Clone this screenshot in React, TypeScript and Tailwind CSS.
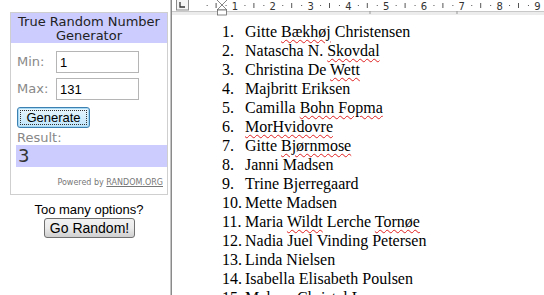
import React from "react";

const names: { n: string; parts: [string, boolean][] }[] = [
  { n: "1.", parts: [["Gitte ", false], ["Bækhøj", true], [" Christensen", false]] },
  { n: "2.", parts: [["Natascha N. ", false], ["Skovdal", true]] },
  { n: "3.", parts: [["Christina De ", false], ["Wett", true]] },
  { n: "4.", parts: [["Majbritt Eriksen", false]] },
  { n: "5.", parts: [["Camilla ", false], ["Bohn Fopma", true]] },
  { n: "6.", parts: [["MorHvidovre", true]] },
  { n: "7.", parts: [["Gitte ", false], ["Bjørnmose", true]] },
  { n: "8.", parts: [["Janni Madsen", false]] },
  { n: "9.", parts: [["Trine Bjerregaard", false]] },
  { n: "10.", parts: [["Mette Madsen", false]] },
  { n: "11.", parts: [["Maria ", false], ["Wildt", true], [" Lerche ", false], ["Tornøe", true]] },
  { n: "12.", parts: [["Nadia Juel Vinding Petersen", false]] },
  { n: "13.", parts: [["Linda Nielsen", false]] },
  { n: "14.", parts: [["Isabella Elisabeth Poulsen", false]] },
  { n: "15.", parts: [["Malene Christel Larsen", false]] },
];

function Ruler() {
  const start = 63; // x of "1" relative to panel
  const step = 37.8;
  const ticks: React.ReactNode[] = [];
  for (let i = -1; i < 10; i++) {
    const base = start + i * step;
    [0.25, 0.5, 0.75].forEach((f, j) => {
      const x = base + f * step;
      if (x < 22 || x > 372) return;
      ticks.push(
        j === 1 ? (
          <line key={`${i}-${j}`} x1={x} x2={x} y1={3} y2={8} stroke="#555" strokeWidth={1} />
        ) : (
          <rect key={`${i}-${j}`} x={x} y={5} width={1} height={1} fill="#555" />
        )
      );
    });
  }
  return (
    <svg width={372} height={16} className="block shrink-0">
      <rect x={0} y={0} width={372} height={16} fill="#ffffff" />
      <rect x={0} y={11} width={372} height={4} fill="#ececec" />
      <line x1={0} x2={372} y1={11.5} y2={11.5} stroke="#c8c8c8" />
      <rect x={4.5} y={-1} width={12} height={11} fill="#f4f4f4" stroke="#8a8a8a" />
      <path d="M8 2 v5 h5" stroke="#333" strokeWidth={1.3} fill="none" />
      <path d="M45 0 L50 5 L55 0 M45 10 L50 5 L55 10 Z" stroke="#666" fill="#fff" strokeWidth={0.8} />
      <rect x={45.5} y={10} width={9} height={5} fill="#fff" stroke="#666" strokeWidth={0.8} />
      <line x1={198} x2={198} y1={11} y2={14} stroke="#999" />
      <line x1={285} x2={285} y1={11} y2={14} stroke="#999" />
      {ticks}
      {Array.from({ length: 9 }, (_, i) => (
        <text
          key={i}
          x={start + i * step}
          y={9.5}
          fontSize={10}
          textAnchor="middle"
          fill="#333"
          fontFamily="'DejaVu Sans', sans-serif"
        >
          {i + 1}
        </text>
      ))}
    </svg>
  );
}

export default function App() {
  return (
    <div className="w-[544px] h-[295px] overflow-hidden bg-white flex">
      {/* left widget column */}
      <div className="w-[170px] shrink-0 pt-[12px] pl-[10px] pr-[2px]">
        <div className="border border-[#cfcfcf] font-['DejaVu_Sans',sans-serif]">
          <div className="bg-[#ccccff] text-center text-[13px] leading-[14px] text-[#222] pt-[2px]">
            True Random Number
            <br />
            Generator
          </div>
          <div className="px-[6px] pt-[8px]">
            <div className="flex items-center h-[22px]">
              <span className="w-[39px] text-[13px] text-[#888]">Min:</span>
              <input
                readOnly
                value="1"
                className="w-[83px] h-[22px] border border-[#b5b5b5] px-[3px] text-[13px] text-black font-['Liberation_Sans',sans-serif] outline-none"
              />
            </div>
            <div className="flex items-center h-[22px] mt-[5px]">
              <span className="w-[39px] text-[13px] text-[#888]">Max:</span>
              <input
                readOnly
                value="131"
                className="w-[83px] h-[22px] border border-[#b5b5b5] px-[3px] text-[13px] text-black font-['Liberation_Sans',sans-serif] outline-none"
              />
            </div>
            <button className="mt-[7px] w-[73px] h-[21px] rounded-[3px] border border-[#3c7fb1] bg-gradient-to-b from-[#eaf6fd] to-[#bee6fd] p-[2px] shadow-[inset_0_0_0_1px_#a7d9f5]">
              <span className="block h-full border border-dotted border-[#333] text-[13px] leading-[13px] text-black font-['Liberation_Sans',sans-serif]">
                Generate
              </span>
            </button>
            <div className="text-[13px] leading-[14px] text-[#888] mt-[2px]">Result:</div>
          </div>
          <div className="ml-[5px] h-[22px] bg-[#ccccff] text-[18px] leading-[22px] text-[#333] pl-[2px]">
            3
          </div>
          <div className="text-right text-[8px] leading-[10px] text-[#777] pr-[4px] pt-[11px] pb-[6px]">
            Powered by <span className="underline">RANDOM.ORG</span>
          </div>
        </div>
        <div className="text-center font-['Liberation_Sans',sans-serif] text-[13px] leading-[15px] text-black mt-[7px]">
          Too many options?
        </div>
        <div className="flex justify-center mt-[1px] pl-[1px]">
          <button className="w-[91px] h-[20px] rounded-[3px] border border-[#707070] bg-gradient-to-b from-[#f2f2f2] via-[#ebebeb] to-[#cfcfcf] text-[14px] leading-[18px] text-black font-['Liberation_Sans',sans-serif]">
            Go Random!
          </button>
        </div>
      </div>
      {/* divider */}
      <div className="w-[2px] shrink-0 bg-[#8a8a8a] border-l border-[#c4c4c4]" />
      {/* document */}
      <div className="flex-1 flex flex-col">
        <Ruler />
        <div className="pt-[6px] pl-[50px] font-['Liberation_Serif',serif] text-[16px] leading-[19px] text-black">
          {names.map((row) => (
            <div key={row.n} className="flex whitespace-nowrap">
              <span className="w-[23px] shrink-0">{row.n}</span>
              <span>
                {row.parts.map(([t, bad], i) =>
                  bad ? (
                    <span key={i} className="underline decoration-wavy decoration-[#e02020] decoration-1 underline-offset-[2px]">
                      {t}
                    </span>
                  ) : (
                    <span key={i}>{t}</span>
                  )
                )}
              </span>
            </div>
          ))}
        </div>
      </div>
    </div>
  );
}
